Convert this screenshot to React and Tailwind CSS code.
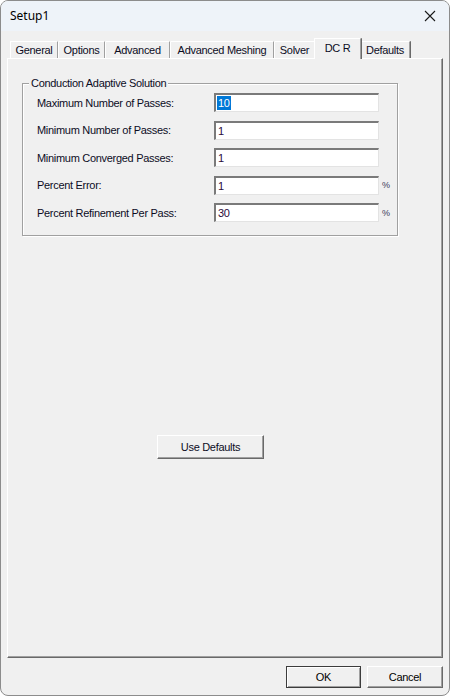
import React from 'react'

const TABS = [
  { label: 'General', w: 48 },
  { label: 'Options', w: 47 },
  { label: 'Advanced', w: 65 },
  { label: 'Advanced Meshing', w: 104 },
  { label: 'Solver', w: 41 },
  { label: 'DC R', w: 45, active: true },
  { label: 'Defaults', w: 50 },
]

const ROWS = [
  { label: 'Maximum Number of Passes:', value: '10', selected: true },
  { label: 'Minimum Number of Passes:', value: '1' },
  { label: 'Minimum Converged Passes:', value: '1' },
  { label: 'Percent Error:', value: '1', unit: '%' },
  { label: 'Percent Refinement Per Pass:', value: '30', unit: '%' },
]

function Tab({ label, w, active }) {
  if (active) {
    return (
      <div
        style={{ width: w + 2 }}
        className="relative z-10 -mx-px -mb-px flex h-[21px] items-start justify-center rounded-t-[1px] border-l border-t border-r border-white border-r-[#a0a0a0] bg-[#f0f0f0] pt-[3px] shadow-[1px_0_0_#696969]"
      >
        <span className="whitespace-nowrap text-[11px] leading-[13px]">{label}</span>
      </div>
    )
  }
  return (
    <div
      style={{ width: w }}
      className="flex h-[17px] items-center justify-center rounded-t-[1px] border-l border-t border-r border-white border-r-[#a0a0a0] shadow-[1px_0_0_#696969]"
    >
      <span className="whitespace-nowrap text-[11px] leading-[13px]">{label}</span>
    </div>
  )
}

function Field({ value, selected }) {
  return (
    <div className="flex h-[19px] w-[165px] items-center border-l-2 border-t-2 border-r border-b border-l-[#7a7a7a] border-t-[#7a7a7a] border-r-[#e3e3e3] border-b-[#e3e3e3] bg-white pl-[1px]">
      <span
        className={
          selected
            ? 'bg-[#0078d7] px-[1px] text-[11px] leading-[14px] text-white'
            : 'px-[1px] text-[11px] leading-[14px] text-[#2a0a3a]'
        }
      >
        {value}
      </span>
    </div>
  )
}

function ClassicButton({ children, width, isDefault }) {
  return (
    <button
      style={{ width }}
      className={
        isDefault
          ? 'flex h-[22px] items-center justify-center border border-[#3c3c3c] bg-[#f0f0f0] text-[11px] text-black shadow-[inset_1px_1px_0_#fff,inset_-1px_-1px_0_#a0a0a0]'
          : 'flex h-[22px] items-center justify-center border-l border-t border-r border-b border-white border-r-[#696969] border-b-[#696969] bg-[#f0f0f0] text-[11px] text-black shadow-[inset_-1px_-1px_0_#a0a0a0]'
      }
    >
      {children}
    </button>
  )
}

export default function App() {
  return (
    <div
      className="flex h-[696px] w-[450px] flex-col overflow-hidden rounded-[8px] border border-[#8c8c8c] bg-[#f0f0f0] tracking-[-0.3px] text-[#0c0c1e]"
      style={{ fontFamily: '"Liberation Sans", Arial, sans-serif' }}
    >
      {/* Title bar */}
      <div className="flex h-[30px] shrink-0 items-center justify-between bg-[#eef3f9] pl-[9px] pr-[10px] tracking-normal">
        <span className="text-[12px] text-black" style={{ fontFamily: '"Noto Sans", "Open Sans", sans-serif' }}>
          Setup1
        </span>
        <svg width="12" height="12" viewBox="0 0 12 12" className="mr-[3px]">
          <path d="M1 1 L11 11 M11 1 L1 11" stroke="#1a1a1a" strokeWidth="1.1" fill="none" />
        </svg>
      </div>

      {/* Body */}
      <div className="flex flex-1 flex-col pl-[6px] pr-[6px] pt-[7px]">
        <div className="flex h-[20px] items-end pl-[3px]">
          {TABS.map((t) => (
            <Tab key={t.label} {...t} />
          ))}
        </div>

        <div className="flex h-[600px] w-[436px] flex-col border-l border-t border-r border-b border-white border-r-[#696969] border-b-[#696969] shadow-[inset_-1px_-1px_0_#a0a0a0]">
          {/* Group box */}
          <div className="relative ml-[14px] mt-[24px] h-[153px] w-[376px] border border-[#a0a0a0] shadow-[1px_1px_0_#fff,inset_1px_1px_0_#fff]">
            <span className="absolute -top-[8px] left-[6px] bg-[#f0f0f0] px-[2px] text-[11px] leading-[14px]">
              Conduction Adaptive Solution
            </span>
            <div className="flex flex-col gap-[8.5px] pl-[14px] pt-[9px]">
              {ROWS.map((r) => (
                <div key={r.label} className="flex h-[19px] items-center">
                  <span className="w-[177px] whitespace-nowrap text-[11px] leading-[14px]">{r.label}</span>
                  <Field value={r.value} selected={r.selected} />
                  {r.unit && <span className="ml-[3px] text-[9px] leading-[12px] text-[#3a3a5a]">{r.unit}</span>}
                </div>
              ))}
            </div>
          </div>

          <div className="ml-[149px] mt-[199px]">
            <div className="flex h-[24px] w-[107px] items-center justify-center border-l border-t border-r border-b border-white border-r-[#696969] border-b-[#696969] text-[11px] shadow-[inset_-1px_-1px_0_#a0a0a0]">
              Use Defaults
            </div>
          </div>
        </div>

        <div className="mt-[8px] flex justify-end gap-[6px]">
          <ClassicButton width={75} isDefault>
            OK
          </ClassicButton>
          <ClassicButton width={76}>Cancel</ClassicButton>
        </div>
      </div>
    </div>
  )
}
